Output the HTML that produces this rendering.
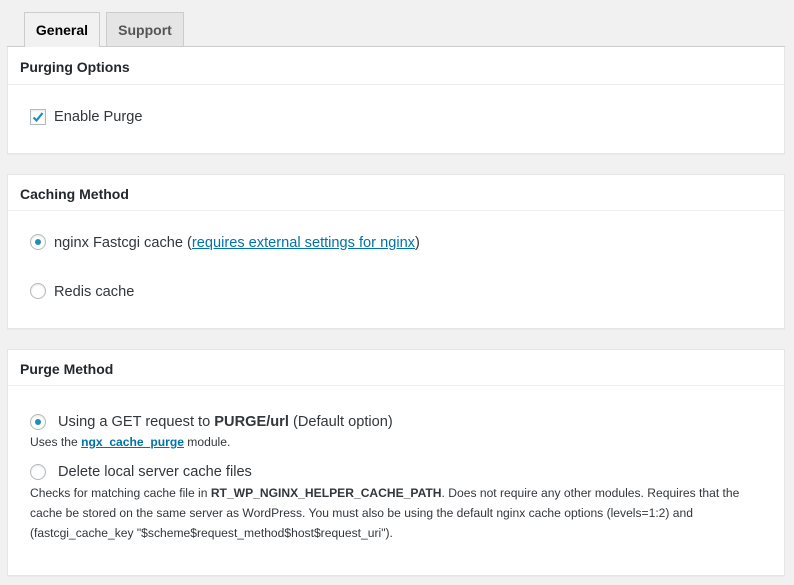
<!DOCTYPE html>
<html><head><style>
body{margin:0;width:794px;height:585px;background:#f1f1f1;font-family:"Liberation Sans",sans-serif;color:#23282d;position:relative;overflow:hidden}
.a{position:absolute}
.tab{position:absolute;top:12px;height:34px;border:1px solid #ccc;border-bottom:none;font-weight:bold;font-size:14px;line-height:34px;text-align:center;box-sizing:border-box}
.box{position:absolute;left:7px;width:778px;background:#fff;border:1px solid #e5e5e5;box-shadow:0 1px 1px rgba(0,0,0,.04);box-sizing:border-box}
.h{position:absolute;left:12px;font-weight:bold;font-size:14px;color:#23282d}
.sep{position:absolute;left:0;right:0;height:1px;background:#eee}
.t{position:absolute;font-size:14.6px;color:#32373c;white-space:nowrap}
.s{position:absolute;font-size:12.1px;color:#32373c;white-space:nowrap}
.r{position:absolute;width:16px;height:16px;border:1px solid #b4b9be;border-radius:50%;box-sizing:border-box;background:#fff;box-shadow:inset 0 1px 2px rgba(0,0,0,.1)}
.r.on::after{content:"";position:absolute;left:4px;top:4px;width:6px;height:6px;border-radius:50%;background:#1e8cbe}
a{color:#0073aa;text-decoration:underline}
</style></head><body>
<div class="a" style="left:7px;top:46px;width:778px;height:1px;background:#ccc"></div>
<div class="tab" style="left:24px;width:76px;background:#f1f1f1;height:36px;color:#000">General</div>
<div class="tab" style="left:106px;width:78px;background:#e5e5e5;color:#555">Support</div>

<div class="box" style="top:47px;height:107px;border-top:none">
<div class="h" style="top:12px">Purging Options</div>
<div class="sep" style="top:37px"></div>
<div class="a" style="left:22px;top:62px;width:16px;height:16px;border:1px solid #b4b9be;box-sizing:border-box;box-shadow:inset 0 1px 2px rgba(0,0,0,.1)">
<svg width="14" height="14" viewBox="0 0 14 14" style="position:absolute;left:0;top:0"><path d="M2.5 7.5 L5.5 10.5 L11.5 3" stroke="#1e8cbe" stroke-width="2.2" fill="none"/></svg></div>
<div class="t" style="left:46px;top:62px">Enable Purge</div>
</div>

<div class="box" style="top:174px;height:155px">
<div class="h" style="top:11px">Caching Method</div>
<div class="sep" style="top:35px"></div>
<div class="r on" style="left:22px;top:59px"></div>
<div class="t" style="left:46px;top:60px">nginx Fastcgi cache (<a>requires external settings for nginx</a>)</div>
<div class="r" style="left:22px;top:108px"></div>
<div class="t" style="left:46px;top:109px">Redis cache</div>
</div>

<div class="box" style="top:349px;height:227px">
<div class="h" style="top:11px">Purge Method</div>
<div class="sep" style="top:35px"></div>
<div class="r on" style="left:22px;top:64px"></div>
<div class="t" style="left:50px;top:64px">Using a GET request to <b>PURGE/url</b> (Default option)</div>
<div class="s" style="left:22px;top:85px">Uses the <a style="font-weight:bold">ngx_cache_purge</a> module.</div>
<div class="r" style="left:22px;top:114px"></div>
<div class="t" style="left:50px;top:114px">Delete local server cache files</div>
<div class="s" style="left:22px;top:136px">Checks for matching cache file in <b>RT_WP_NGINX_HELPER_CACHE_PATH</b>. Does not require any other modules. Requires that the</div>
<div class="s" style="left:22px;top:156px">cache be stored on the same server as WordPress. You must also be using the default nginx cache options (levels=1:2) and</div>
<div class="s" style="left:22px;top:176px">(fastcgi_cache_key "$scheme$request_method$host$request_uri").</div>
</div>
</body></html>
